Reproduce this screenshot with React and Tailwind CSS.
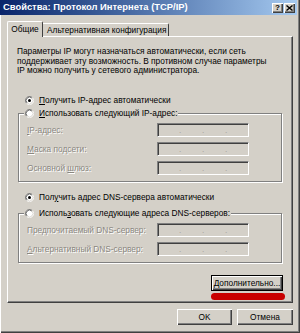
import React from "react";

// classic radio button, 9px
function Radio({ checked }) {
  return (
    <svg width="9" height="9" viewBox="0 0 12 12" className="shrink-0">
      <circle cx="6" cy="6" r="5" fill="#fff" />
      <path d="M2.1 9.9 A5.5 5.5 0 0 1 9.9 2.1" fill="none" stroke="#808080" strokeWidth="1" />
      <path d="M9.9 2.1 A5.5 5.5 0 0 1 2.1 9.9" fill="none" stroke="#fff" strokeWidth="1" />
      <path d="M2.8 9.2 A4.5 4.5 0 0 1 9.2 2.8" fill="none" stroke="#404040" strokeWidth="1" />
      <path d="M9.2 2.8 A4.5 4.5 0 0 1 2.8 9.2" fill="none" stroke="#d4d0c8" strokeWidth="1" />
      {checked && <circle cx="6" cy="6" r="2" fill="#000" />}
    </svg>
  );
}

function IpField() {
  return (
    <div className="w-[92px] h-[14px] shrink-0 border border-t-[#808080] border-l-[#808080] border-r-white border-b-white bg-[#d4d0c8] shadow-[inset_1px_1px_0_#404040] flex items-center text-[#a8a6a0] leading-none">
      <span className="flex-1" />
      <span className="w-[2px] text-center">.</span>
      <span className="flex-1" />
      <span className="w-[2px] text-center">.</span>
      <span className="flex-1" />
      <span className="w-[2px] text-center">.</span>
      <span className="flex-1" />
    </div>
  );
}

function FieldRow({ children }) {
  return (
    <div className="h-[14px] flex items-center pl-[8px]">
      <span className="w-[130px] shrink-0 text-[#8a8780] [text-shadow:1px_1px_0_#fff] whitespace-nowrap">{children}</span>
      <IpField />
    </div>
  );
}

function GroupBox({ legend, children, className }) {
  return (
    <div className={`ml-[10px] w-[264px] border border-[#808080] shadow-[inset_1px_1px_0_#fff,1px_1px_0_#fff] pb-[6px] flex flex-col ${className}`}>
      <div className="-mt-[7px] ml-[5px] h-[12px] self-start flex items-center gap-[5px] bg-[#d4d0c8] px-[1px] whitespace-nowrap">
        <Radio />
        <span>{legend}</span>
      </div>
      <div className="mt-[4px] flex flex-col gap-[5px]">{children}</div>
    </div>
  );
}

const btn =
  "h-[16px] flex items-center justify-center bg-[#d4d0c8] shadow-[inset_1px_1px_0_#fff,inset_-1px_-1px_0_#404040,inset_-2px_-2px_0_#808080]";

export default function App() {
  return (
    <div className="w-[300px] h-[333px] overflow-hidden bg-[#d4d0c8] font-['Liberation_Sans',Arial,sans-serif] text-[8.3px] text-black shadow-[inset_1px_0_0_#fff,inset_-1px_-1px_0_#404040,inset_-2px_-2px_0_#808080] flex flex-col">
      {/* заголовок окна */}
      <div className="h-[15px] mr-[3px] shrink-0 flex items-center bg-linear-to-r from-[#0a246a] to-[#a6caf0]">
        <span className="pl-[3px] text-white font-bold text-[9.4px] whitespace-nowrap">
          Свойства: Протокол Интернета (TCP/IP)
        </span>
        <div className="ml-auto mr-[2px] flex gap-[1px]">
          <div className="w-[11px] h-[10px] bg-[#d4d0c8] shadow-[inset_1px_1px_0_#fff,inset_-1px_-1px_0_#404040,inset_-2px_-2px_0_#808080] flex items-center justify-center text-[8px] font-bold leading-none">
            ?
          </div>
          <div className="w-[11px] h-[10px] bg-[#d4d0c8] shadow-[inset_1px_1px_0_#fff,inset_-1px_-1px_0_#404040,inset_-2px_-2px_0_#808080] flex items-center justify-center">
            <svg width="7" height="6" viewBox="0 0 7 6">
              <path d="M0.5 0.5 L6.5 5.5 M6.5 0.5 L0.5 5.5" stroke="#000" strokeWidth="1.4" />
            </svg>
          </div>
        </div>
      </div>

      {/* вкладки */}
      <div className="mt-[6px] ml-[7px] h-[16px] -mb-px relative z-10 flex items-end whitespace-nowrap">
        <div className="h-[16px] w-[36px] bg-[#d4d0c8] border-l border-t border-white border-r border-r-[#404040] rounded-t-[2px] flex items-center justify-center pb-px">
          Общие
        </div>
        <div className="h-[13px] mb-px w-[126px] pl-[4px] border-t border-white border-r border-r-[#404040] rounded-tr-[2px] flex items-center">
          Альтернативная конфигурация
        </div>
      </div>

      {/* панель */}
      <div className="ml-[7px] w-[286px] h-[267px] shrink-0 border border-t-white border-l-white border-r-[#404040] border-b-[#404040] shadow-[inset_-1px_-1px_0_#808080] flex flex-col">
        <div className="mt-[10px] ml-[9px] h-[29px] leading-[9.5px] whitespace-nowrap">
          Параметры IP могут назначаться автоматически, если сеть
          <br />
          поддерживает эту возможность. В противном случае параметры
          <br />
          IP можно получить у сетевого администратора.
        </div>

        <div className="mt-[18px] ml-[17px] h-[12px] flex items-center gap-[5px] whitespace-nowrap">
          <Radio checked />
          <span>
            <span className="underline">П</span>олучить IP-адрес автоматически
          </span>
        </div>

        <GroupBox
          className="mt-[7px]"
          legend={
            <>
              <span className="underline">И</span>спользовать следующий IP-адрес:
            </>
          }
        >
          <FieldRow>
            <span className="underline">I</span>P-адрес:
          </FieldRow>
          <FieldRow>
            <span className="underline">М</span>аска подсети:
          </FieldRow>
          <FieldRow>
            Основной <span className="underline">ш</span>люз:
          </FieldRow>
        </GroupBox>

        <div className="mt-[9px] ml-[17px] h-[12px] flex items-center gap-[5px] whitespace-nowrap">
          <Radio checked />
          <span>
            Пол<span className="underline">у</span>чить адрес DNS-сервера автоматически
          </span>
        </div>

        <GroupBox
          className="mt-[10px]"
          legend={
            <>
              Исполь<span className="underline">з</span>овать следующие адреса DNS-серверов:
            </>
          }
        >
          <FieldRow>
            Предпочитаемый DNS-сервер:
          </FieldRow>
          <FieldRow>
            <span className="underline">А</span>льтернативный DNS-сервер:
          </FieldRow>
        </GroupBox>

        <button className={`${btn} mt-[12px] self-end mr-[9px] w-[72px] border border-black`}>
          <span className="underline">Д</span>ополнительно...
        </button>
        <div className="mt-[2px] self-end mr-[7px] w-[74px] h-[7px] rounded-full bg-[#c80000]" />
      </div>

      {/* кнопки диалога */}
      <div className="mt-[6px] mr-[7px] flex justify-end gap-[5px]">
        <button className={`${btn} w-[55px]`}>OK</button>
        <button className={`${btn} w-[56px]`}>Отмена</button>
      </div>
    </div>
  );
}
